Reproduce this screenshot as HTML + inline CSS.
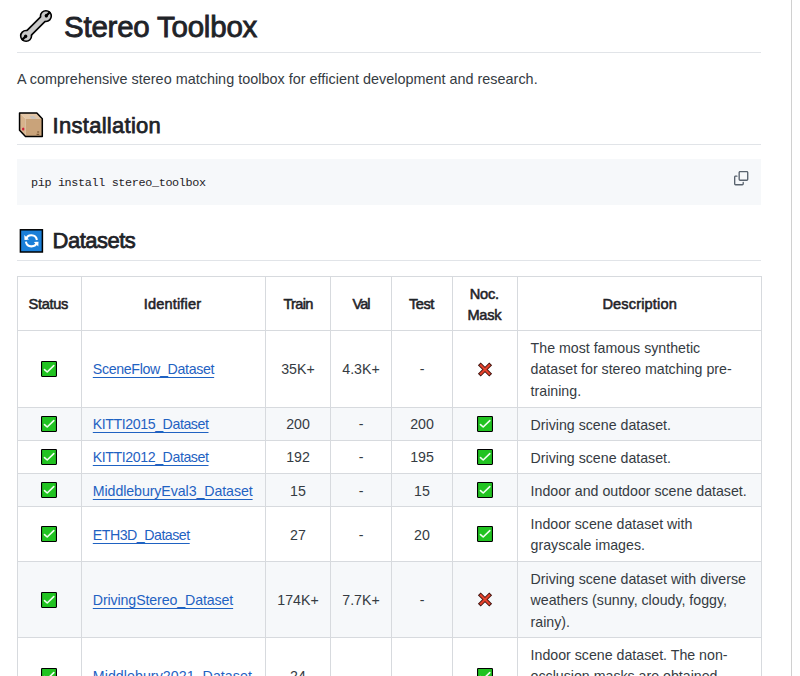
<!DOCTYPE html>
<html><head><meta charset="utf-8"><style>
html,body{margin:0;padding:0;background:#fff;width:800px;height:676px;overflow:hidden}
body{position:relative;font-family:"Liberation Sans",sans-serif}
.t{position:absolute;white-space:pre}
.r{position:absolute}
.i{position:absolute;overflow:visible}
</style></head><body>
<div class="t" style="left:64.00px;top:4.78px;font-size:29.5px;line-height:44px;font-weight:normal;color:#1f2328;letter-spacing:-0.227px;-webkit-text-stroke:0.85px #1f2328;">Stereo Toolbox</div>
<div class="r" style="left:17px;top:52px;width:744px;height:1px;background:#e1e4e8"></div>
<svg class="i" style="left:18.4px;top:8.4px" width="36" height="36" viewBox="0 0 36 36">
<g transform="rotate(-45 18 18)">
<line x1="4" y1="18" x2="32" y2="18" stroke="#000" stroke-width="8"/>
<circle cx="4" cy="18" r="6.2" fill="#000"/><circle cx="32" cy="18" r="6.2" fill="#000"/>
<line x1="4" y1="18" x2="32" y2="18" stroke="#c9c9c9" stroke-width="4.8"/>
<circle cx="4" cy="18" r="4.6" fill="#c9c9c9"/><circle cx="32" cy="18" r="4.6" fill="#c9c9c9"/>
<circle cx="3.4" cy="18" r="1.7" fill="#000"/><rect x="-2" y="16.9" width="5.4" height="2.2" fill="#000"/>
<circle cx="32.6" cy="18" r="1.7" fill="#000"/><rect x="32.6" y="16.9" width="5.4" height="2.2" fill="#000"/>
</g></svg>
<svg class="i" style="left:0px;top:100px" width="60" height="50" viewBox="0 100 60 50">
<polygon points="19.55,113 36.85,113 42.3,118.7 25.5,118.7" fill="#e3c6a6"/>
<polygon points="19.55,113 25.5,118.7 25.5,136.4 19.55,130.3" fill="#d7b38c"/>
<polygon points="25.5,118.7 42.3,118.7 42.3,136.4 25.5,136.4" fill="#c9a37a"/>
<polygon points="31.5,118.7 36.5,118.7 34,116 29.5,116" fill="#c8c2bc"/>
<ellipse cx="23.2" cy="129" rx="1.2" ry="1.6" fill="#d0203a"/>
<rect x="37.2" y="131.5" width="2" height="1" fill="#6b4a2a"/><rect x="36.6" y="133.8" width="2.6" height="1" fill="#6b4a2a"/>
<polygon points="19.55,113 36.85,113 42.3,118.7 42.3,136.4 25.5,136.4 19.55,130.3" fill="none" stroke="#000" stroke-width="1.5" stroke-linejoin="round"/>
</svg>
<svg class="i" style="left:0px;top:220px" width="60" height="40" viewBox="0 220 60 40">
<rect x="20.4" y="229.8" width="22" height="22.2" fill="#1a7fd8" stroke="#000" stroke-width="1.5"/>
<path d="M25.9 239.6 A5.6 5.6 0 0 1 36.9 240" fill="none" stroke="#fff" stroke-width="2.1"/>
<path d="M36.9 242 A5.6 5.6 0 0 1 25.9 241.6" fill="none" stroke="#fff" stroke-width="2.1"/>
<polygon points="24.3,235.1 24.5,239.9 29,239.6" fill="#fff"/>
<polygon points="38.5,241.7 38.3,246.5 33.8,242" fill="#fff"/>
</svg>
<div class="t" style="left:17.00px;top:67.71px;font-size:14.4px;line-height:22px;font-weight:normal;color:#353b42;letter-spacing:0.012px;">A comprehensive stereo matching toolbox for efficient development and research.</div>
<div class="t" style="left:52.60px;top:108.88px;font-size:22px;line-height:33px;font-weight:normal;color:#1f2328;letter-spacing:0.277px;-webkit-text-stroke:0.75px #1f2328;">Installation</div>
<div class="r" style="left:17px;top:144px;width:744px;height:1px;background:#e1e4e8"></div>
<div class="r" style="left:17px;top:159px;width:744px;height:46px;background:#f6f8fa"></div>
<div class="t" style="left:31px;top:175.3px;font-family:'Liberation Mono',monospace;font-size:11.8px;letter-spacing:-0.36px;line-height:17px;color:#1f2328">pip install stereo_toolbox</div>
<div class="t" style="left:52.60px;top:224.38px;font-size:22px;line-height:33px;font-weight:normal;color:#1f2328;letter-spacing:-0.507px;-webkit-text-stroke:0.75px #1f2328;">Datasets</div>
<div class="r" style="left:17px;top:260px;width:744px;height:1px;background:#e1e4e8"></div>
<div class="r" style="left:17px;top:407px;width:744px;height:33px;background:#f6f8fa"></div>
<div class="r" style="left:17px;top:473px;width:744px;height:33px;background:#f6f8fa"></div>
<div class="r" style="left:17px;top:561px;width:744px;height:76px;background:#f6f8fa"></div>
<div class="r" style="left:17px;top:276px;width:745px;height:1px;background:#d7dade"></div>
<div class="r" style="left:17px;top:330px;width:745px;height:1px;background:#d7dade"></div>
<div class="r" style="left:17px;top:407px;width:745px;height:1px;background:#d7dade"></div>
<div class="r" style="left:17px;top:440px;width:745px;height:1px;background:#d7dade"></div>
<div class="r" style="left:17px;top:473px;width:745px;height:1px;background:#d7dade"></div>
<div class="r" style="left:17px;top:506px;width:745px;height:1px;background:#d7dade"></div>
<div class="r" style="left:17px;top:561px;width:745px;height:1px;background:#d7dade"></div>
<div class="r" style="left:17px;top:637px;width:745px;height:1px;background:#d7dade"></div>
<div class="r" style="left:17px;top:714px;width:745px;height:1px;background:#d7dade"></div>
<div class="r" style="left:17px;top:276px;width:1px;height:424px;background:#d7dade"></div>
<div class="r" style="left:81px;top:276px;width:1px;height:424px;background:#d7dade"></div>
<div class="r" style="left:265px;top:276px;width:1px;height:424px;background:#d7dade"></div>
<div class="r" style="left:330px;top:276px;width:1px;height:424px;background:#d7dade"></div>
<div class="r" style="left:391px;top:276px;width:1px;height:424px;background:#d7dade"></div>
<div class="r" style="left:452px;top:276px;width:1px;height:424px;background:#d7dade"></div>
<div class="r" style="left:517px;top:276px;width:1px;height:424px;background:#d7dade"></div>
<div class="r" style="left:761px;top:276px;width:1px;height:424px;background:#d7dade"></div>
<div class="t" style="left:-251.70px;width:600px;text-align:center;top:293.34px;font-size:14.6px;line-height:22px;font-weight:normal;color:#1f2328;letter-spacing:-0.330px;-webkit-text-stroke:0.55px #1f2328;">Status</div>
<div class="t" style="left:-127.50px;width:600px;text-align:center;top:293.34px;font-size:14.6px;line-height:22px;font-weight:normal;color:#1f2328;letter-spacing:0.139px;-webkit-text-stroke:0.55px #1f2328;">Identifier</div>
<div class="t" style="left:-2.00px;width:600px;text-align:center;top:293.34px;font-size:14.6px;line-height:22px;font-weight:normal;color:#1f2328;letter-spacing:-0.713px;-webkit-text-stroke:0.55px #1f2328;">Train</div>
<div class="t" style="left:61.00px;width:600px;text-align:center;top:293.34px;font-size:14.6px;line-height:22px;font-weight:normal;color:#1f2328;letter-spacing:-1.075px;-webkit-text-stroke:0.55px #1f2328;">Val</div>
<div class="t" style="left:121.40px;width:600px;text-align:center;top:293.34px;font-size:14.6px;line-height:22px;font-weight:normal;color:#1f2328;letter-spacing:-0.517px;-webkit-text-stroke:0.55px #1f2328;">Test</div>
<div class="t" style="left:184.30px;width:600px;text-align:center;top:282.64px;font-size:14.6px;line-height:22px;font-weight:normal;color:#1f2328;letter-spacing:-0.183px;-webkit-text-stroke:0.55px #1f2328;">Noc.</div>
<div class="t" style="left:184.40px;width:600px;text-align:center;top:304.44px;font-size:14.6px;line-height:22px;font-weight:normal;color:#1f2328;letter-spacing:-0.250px;-webkit-text-stroke:0.55px #1f2328;">Mask</div>
<div class="t" style="left:339.70px;width:600px;text-align:center;top:293.34px;font-size:14.6px;line-height:22px;font-weight:normal;color:#1f2328;letter-spacing:0.145px;-webkit-text-stroke:0.55px #1f2328;">Description</div>
<svg class="i" style="left:41px;top:361px" width="16" height="16" viewBox="0 0 16 16"><rect x="0.55" y="0.55" width="14.9" height="14.9" rx="0.6" fill="#21c321" stroke="#000" stroke-width="1.1"/><path d="M3.5 8.6 L6.2 11 L12.8 4.6" fill="none" stroke="#f2fff2" stroke-width="1.6" stroke-linecap="round" stroke-linejoin="round"/></svg>
<div class="t" style="left:92.80px;top:358.98px;font-size:14.2px;line-height:21px;font-weight:normal;color:#1f62c2;letter-spacing:-0.331px;"><span style="text-decoration:underline;text-underline-offset:2.6px;text-decoration-thickness:1px">SceneFlow_Dataset</span></div>
<div class="t" style="left:-2.00px;width:600px;text-align:center;top:358.98px;font-size:14.2px;line-height:21px;font-weight:normal;color:#353b42;letter-spacing:0.000px;">35K+</div>
<div class="t" style="left:61.00px;width:600px;text-align:center;top:358.98px;font-size:14.2px;line-height:21px;font-weight:normal;color:#353b42;letter-spacing:0.000px;">4.3K+</div>
<div class="t" style="left:122.00px;width:600px;text-align:center;top:358.98px;font-size:14.2px;line-height:21px;font-weight:normal;color:#353b42;letter-spacing:0.000px;">-</div>
<svg class="i" style="left:477px;top:360.5px" width="16" height="17" viewBox="0 0 16 17"><g fill="none" stroke-linecap="butt"><path d="M2.3 2.8 L13.7 14.2 M13.7 2.8 L2.3 14.2" stroke="#3b0f0a" stroke-width="4"/><path d="M3.0 3.5 L13.0 13.5 M13.0 3.5 L3.0 13.5" stroke="#e5432d" stroke-width="2.3"/></g></svg>
<div class="t" style="left:530.60px;top:337.58px;font-size:14.2px;line-height:21px;font-weight:normal;color:#353b42;letter-spacing:0.000px;">The most famous synthetic</div>
<div class="t" style="left:530.60px;top:359.18px;font-size:14.2px;line-height:21px;font-weight:normal;color:#353b42;letter-spacing:0.000px;">dataset for stereo matching pre-</div>
<div class="t" style="left:530.60px;top:380.78px;font-size:14.2px;line-height:21px;font-weight:normal;color:#353b42;letter-spacing:0.000px;">training.</div>
<svg class="i" style="left:41px;top:416px" width="16" height="16" viewBox="0 0 16 16"><rect x="0.55" y="0.55" width="14.9" height="14.9" rx="0.6" fill="#21c321" stroke="#000" stroke-width="1.1"/><path d="M3.5 8.6 L6.2 11 L12.8 4.6" fill="none" stroke="#f2fff2" stroke-width="1.6" stroke-linecap="round" stroke-linejoin="round"/></svg>
<div class="t" style="left:92.80px;top:413.98px;font-size:14.2px;line-height:21px;font-weight:normal;color:#1f62c2;letter-spacing:-0.431px;"><span style="text-decoration:underline;text-underline-offset:2.6px;text-decoration-thickness:1px">KITTI2015_Dataset</span></div>
<div class="t" style="left:-2.00px;width:600px;text-align:center;top:413.98px;font-size:14.2px;line-height:21px;font-weight:normal;color:#353b42;letter-spacing:0.000px;">200</div>
<div class="t" style="left:61.00px;width:600px;text-align:center;top:413.98px;font-size:14.2px;line-height:21px;font-weight:normal;color:#353b42;letter-spacing:0.000px;">-</div>
<div class="t" style="left:122.00px;width:600px;text-align:center;top:413.98px;font-size:14.2px;line-height:21px;font-weight:normal;color:#353b42;letter-spacing:0.000px;">200</div>
<svg class="i" style="left:477px;top:416px" width="16" height="16" viewBox="0 0 16 16"><rect x="0.55" y="0.55" width="14.9" height="14.9" rx="0.6" fill="#21c321" stroke="#000" stroke-width="1.1"/><path d="M3.5 8.6 L6.2 11 L12.8 4.6" fill="none" stroke="#f2fff2" stroke-width="1.6" stroke-linecap="round" stroke-linejoin="round"/></svg>
<div class="t" style="left:530.60px;top:414.58px;font-size:14.2px;line-height:21px;font-weight:normal;color:#353b42;letter-spacing:0.000px;">Driving scene dataset.</div>
<svg class="i" style="left:41px;top:449px" width="16" height="16" viewBox="0 0 16 16"><rect x="0.55" y="0.55" width="14.9" height="14.9" rx="0.6" fill="#21c321" stroke="#000" stroke-width="1.1"/><path d="M3.5 8.6 L6.2 11 L12.8 4.6" fill="none" stroke="#f2fff2" stroke-width="1.6" stroke-linecap="round" stroke-linejoin="round"/></svg>
<div class="t" style="left:92.80px;top:446.98px;font-size:14.2px;line-height:21px;font-weight:normal;color:#1f62c2;letter-spacing:-0.431px;"><span style="text-decoration:underline;text-underline-offset:2.6px;text-decoration-thickness:1px">KITTI2012_Dataset</span></div>
<div class="t" style="left:-2.00px;width:600px;text-align:center;top:446.98px;font-size:14.2px;line-height:21px;font-weight:normal;color:#353b42;letter-spacing:0.000px;">192</div>
<div class="t" style="left:61.00px;width:600px;text-align:center;top:446.98px;font-size:14.2px;line-height:21px;font-weight:normal;color:#353b42;letter-spacing:0.000px;">-</div>
<div class="t" style="left:122.00px;width:600px;text-align:center;top:446.98px;font-size:14.2px;line-height:21px;font-weight:normal;color:#353b42;letter-spacing:0.000px;">195</div>
<svg class="i" style="left:477px;top:449px" width="16" height="16" viewBox="0 0 16 16"><rect x="0.55" y="0.55" width="14.9" height="14.9" rx="0.6" fill="#21c321" stroke="#000" stroke-width="1.1"/><path d="M3.5 8.6 L6.2 11 L12.8 4.6" fill="none" stroke="#f2fff2" stroke-width="1.6" stroke-linecap="round" stroke-linejoin="round"/></svg>
<div class="t" style="left:530.60px;top:447.58px;font-size:14.2px;line-height:21px;font-weight:normal;color:#353b42;letter-spacing:0.000px;">Driving scene dataset.</div>
<svg class="i" style="left:41px;top:482px" width="16" height="16" viewBox="0 0 16 16"><rect x="0.55" y="0.55" width="14.9" height="14.9" rx="0.6" fill="#21c321" stroke="#000" stroke-width="1.1"/><path d="M3.5 8.6 L6.2 11 L12.8 4.6" fill="none" stroke="#f2fff2" stroke-width="1.6" stroke-linecap="round" stroke-linejoin="round"/></svg>
<div class="t" style="left:92.80px;top:480.98px;font-size:14.2px;line-height:21px;font-weight:normal;color:#1f62c2;letter-spacing:-0.082px;"><span style="text-decoration:underline;text-underline-offset:2.6px;text-decoration-thickness:1px">MiddleburyEval3_Dataset</span></div>
<div class="t" style="left:-2.00px;width:600px;text-align:center;top:480.98px;font-size:14.2px;line-height:21px;font-weight:normal;color:#353b42;letter-spacing:0.000px;">15</div>
<div class="t" style="left:61.00px;width:600px;text-align:center;top:480.98px;font-size:14.2px;line-height:21px;font-weight:normal;color:#353b42;letter-spacing:0.000px;">-</div>
<div class="t" style="left:122.00px;width:600px;text-align:center;top:480.98px;font-size:14.2px;line-height:21px;font-weight:normal;color:#353b42;letter-spacing:0.000px;">15</div>
<svg class="i" style="left:477px;top:482px" width="16" height="16" viewBox="0 0 16 16"><rect x="0.55" y="0.55" width="14.9" height="14.9" rx="0.6" fill="#21c321" stroke="#000" stroke-width="1.1"/><path d="M3.5 8.6 L6.2 11 L12.8 4.6" fill="none" stroke="#f2fff2" stroke-width="1.6" stroke-linecap="round" stroke-linejoin="round"/></svg>
<div class="t" style="left:530.60px;top:480.58px;font-size:14.2px;line-height:21px;font-weight:normal;color:#353b42;letter-spacing:0.000px;">Indoor and outdoor scene dataset.</div>
<svg class="i" style="left:41px;top:526px" width="16" height="16" viewBox="0 0 16 16"><rect x="0.55" y="0.55" width="14.9" height="14.9" rx="0.6" fill="#21c321" stroke="#000" stroke-width="1.1"/><path d="M3.5 8.6 L6.2 11 L12.8 4.6" fill="none" stroke="#f2fff2" stroke-width="1.6" stroke-linecap="round" stroke-linejoin="round"/></svg>
<div class="t" style="left:92.80px;top:524.98px;font-size:14.2px;line-height:21px;font-weight:normal;color:#1f62c2;letter-spacing:-0.492px;"><span style="text-decoration:underline;text-underline-offset:2.6px;text-decoration-thickness:1px">ETH3D_Dataset</span></div>
<div class="t" style="left:-2.00px;width:600px;text-align:center;top:524.98px;font-size:14.2px;line-height:21px;font-weight:normal;color:#353b42;letter-spacing:0.000px;">27</div>
<div class="t" style="left:61.00px;width:600px;text-align:center;top:524.98px;font-size:14.2px;line-height:21px;font-weight:normal;color:#353b42;letter-spacing:0.000px;">-</div>
<div class="t" style="left:122.00px;width:600px;text-align:center;top:524.98px;font-size:14.2px;line-height:21px;font-weight:normal;color:#353b42;letter-spacing:0.000px;">20</div>
<svg class="i" style="left:477px;top:526px" width="16" height="16" viewBox="0 0 16 16"><rect x="0.55" y="0.55" width="14.9" height="14.9" rx="0.6" fill="#21c321" stroke="#000" stroke-width="1.1"/><path d="M3.5 8.6 L6.2 11 L12.8 4.6" fill="none" stroke="#f2fff2" stroke-width="1.6" stroke-linecap="round" stroke-linejoin="round"/></svg>
<div class="t" style="left:530.60px;top:513.58px;font-size:14.2px;line-height:21px;font-weight:normal;color:#353b42;letter-spacing:0.000px;">Indoor scene dataset with</div>
<div class="t" style="left:530.60px;top:535.18px;font-size:14.2px;line-height:21px;font-weight:normal;color:#353b42;letter-spacing:0.000px;">grayscale images.</div>
<svg class="i" style="left:41px;top:592px" width="16" height="16" viewBox="0 0 16 16"><rect x="0.55" y="0.55" width="14.9" height="14.9" rx="0.6" fill="#21c321" stroke="#000" stroke-width="1.1"/><path d="M3.5 8.6 L6.2 11 L12.8 4.6" fill="none" stroke="#f2fff2" stroke-width="1.6" stroke-linecap="round" stroke-linejoin="round"/></svg>
<div class="t" style="left:92.80px;top:589.98px;font-size:14.2px;line-height:21px;font-weight:normal;color:#1f62c2;letter-spacing:-0.115px;"><span style="text-decoration:underline;text-underline-offset:2.6px;text-decoration-thickness:1px">DrivingStereo_Dataset</span></div>
<div class="t" style="left:-2.00px;width:600px;text-align:center;top:589.98px;font-size:14.2px;line-height:21px;font-weight:normal;color:#353b42;letter-spacing:0.000px;">174K+</div>
<div class="t" style="left:61.00px;width:600px;text-align:center;top:589.98px;font-size:14.2px;line-height:21px;font-weight:normal;color:#353b42;letter-spacing:0.000px;">7.7K+</div>
<div class="t" style="left:122.00px;width:600px;text-align:center;top:589.98px;font-size:14.2px;line-height:21px;font-weight:normal;color:#353b42;letter-spacing:0.000px;">-</div>
<svg class="i" style="left:477px;top:591.0px" width="16" height="17" viewBox="0 0 16 17"><g fill="none" stroke-linecap="butt"><path d="M2.3 2.8 L13.7 14.2 M13.7 2.8 L2.3 14.2" stroke="#3b0f0a" stroke-width="4"/><path d="M3.0 3.5 L13.0 13.5 M13.0 3.5 L3.0 13.5" stroke="#e5432d" stroke-width="2.3"/></g></svg>
<div class="t" style="left:530.60px;top:568.58px;font-size:14.2px;line-height:21px;font-weight:normal;color:#353b42;letter-spacing:0.000px;">Driving scene dataset with diverse</div>
<div class="t" style="left:530.60px;top:590.18px;font-size:14.2px;line-height:21px;font-weight:normal;color:#353b42;letter-spacing:0.000px;">weathers (sunny, cloudy, foggy,</div>
<div class="t" style="left:530.60px;top:611.78px;font-size:14.2px;line-height:21px;font-weight:normal;color:#353b42;letter-spacing:0.000px;">rainy).</div>
<svg class="i" style="left:41px;top:668px" width="16" height="16" viewBox="0 0 16 16"><rect x="0.55" y="0.55" width="14.9" height="14.9" rx="0.6" fill="#21c321" stroke="#000" stroke-width="1.1"/><path d="M3.5 8.6 L6.2 11 L12.8 4.6" fill="none" stroke="#f2fff2" stroke-width="1.6" stroke-linecap="round" stroke-linejoin="round"/></svg>
<div class="t" style="left:92.80px;top:665.98px;font-size:14.2px;line-height:21px;font-weight:normal;color:#1f62c2;letter-spacing:0.062px;"><span style="text-decoration:underline;text-underline-offset:2.6px;text-decoration-thickness:1px">Middlebury2021_Dataset</span></div>
<div class="t" style="left:-2.00px;width:600px;text-align:center;top:665.98px;font-size:14.2px;line-height:21px;font-weight:normal;color:#353b42;letter-spacing:0.000px;">24</div>
<div class="t" style="left:61.00px;width:600px;text-align:center;top:665.98px;font-size:14.2px;line-height:21px;font-weight:normal;color:#353b42;letter-spacing:0.000px;"></div>
<div class="t" style="left:122.00px;width:600px;text-align:center;top:665.98px;font-size:14.2px;line-height:21px;font-weight:normal;color:#353b42;letter-spacing:0.000px;"></div>
<svg class="i" style="left:477px;top:668px" width="16" height="16" viewBox="0 0 16 16"><rect x="0.55" y="0.55" width="14.9" height="14.9" rx="0.6" fill="#21c321" stroke="#000" stroke-width="1.1"/><path d="M3.5 8.6 L6.2 11 L12.8 4.6" fill="none" stroke="#f2fff2" stroke-width="1.6" stroke-linecap="round" stroke-linejoin="round"/></svg>
<div class="t" style="left:530.60px;top:644.58px;font-size:14.2px;line-height:21px;font-weight:normal;color:#353b42;letter-spacing:0.000px;">Indoor scene dataset. The non-</div>
<div class="t" style="left:530.60px;top:666.18px;font-size:14.2px;line-height:21px;font-weight:normal;color:#353b42;letter-spacing:0.000px;">occlusion masks are obtained</div>
<div class="t" style="left:530.60px;top:687.78px;font-size:14.2px;line-height:21px;font-weight:normal;color:#353b42;letter-spacing:0.000px;">using the provided code.</div>
<svg class="i" style="left:734px;top:171px" width="14.4" height="14.4" viewBox="0 0 16 16" fill="#59636e"><path d="M0 6.75C0 5.784.784 5 1.75 5h1.5a.75.75 0 0 1 0 1.5h-1.5a.25.25 0 0 0-.25.25v7.5c0 .138.112.25.25.25h7.5a.25.25 0 0 0 .25-.25v-1.5a.75.75 0 0 1 1.5 0v1.5A1.75 1.75 0 0 1 9.25 16h-7.5A1.75 1.75 0 0 1 0 14.25Z"/><path d="M5 1.75C5 .784 5.784 0 6.75 0h7.5C15.216 0 16 .784 16 1.75v7.5A1.75 1.75 0 0 1 14.25 11h-7.5A1.75 1.75 0 0 1 5 9.25Zm1.75-.25a.25.25 0 0 0-.25.25v7.5c0 .138.112.25.25.25h7.5a.25.25 0 0 0 .25-.25v-7.5a.25.25 0 0 0-.25-.25Z"/></svg>
<div class="r" style="left:791px;top:0px;width:1px;height:676px;background:#d0d0d0"></div>
</body></html>
